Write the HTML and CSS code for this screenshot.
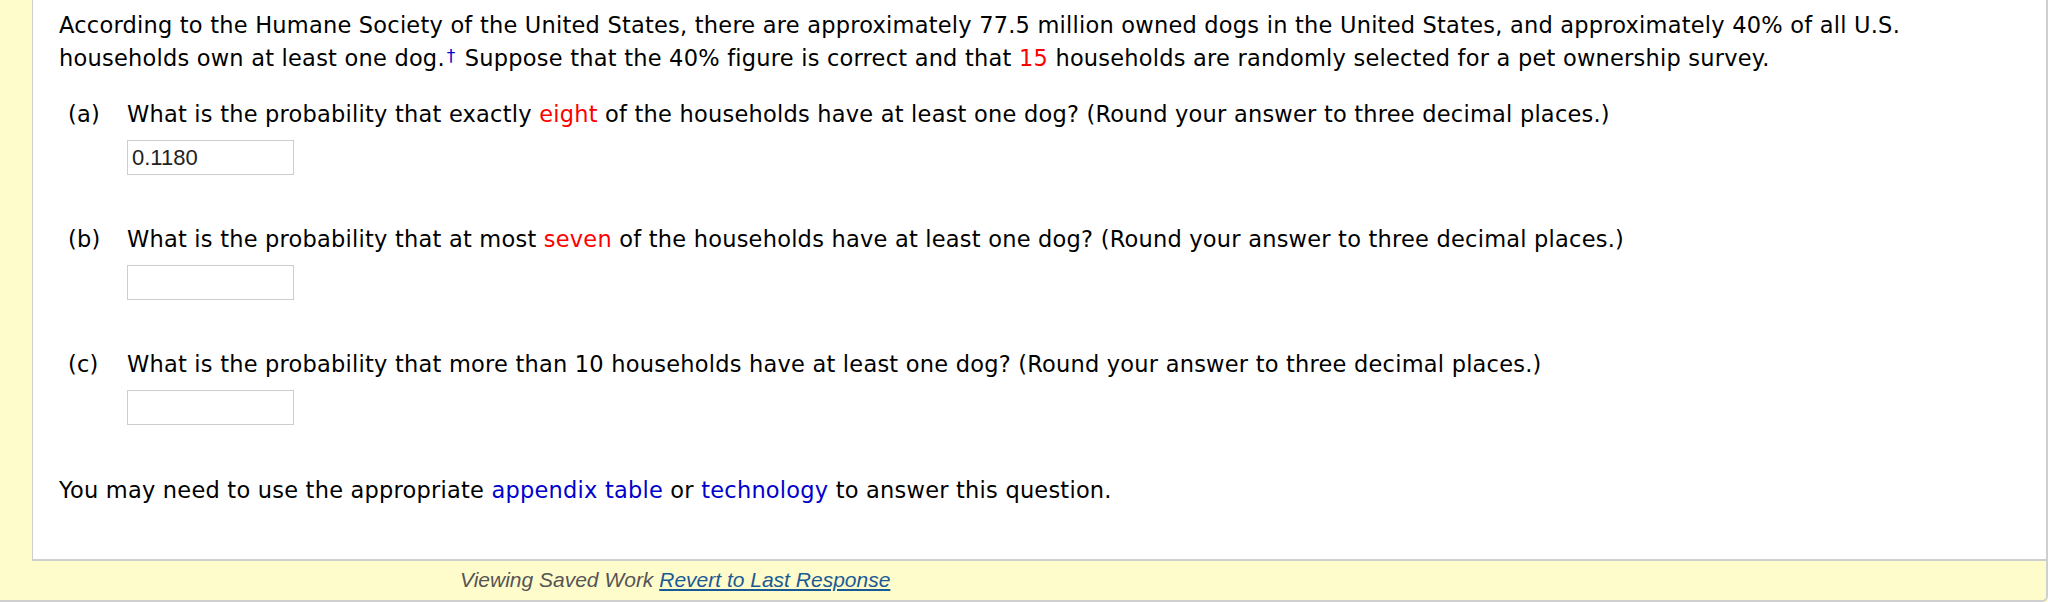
FILE: index.html
```html
<!DOCTYPE html>
<html>
<head>
<meta charset="utf-8">
<link rel="stylesheet" href="styles.css">
</head>
<body>
<div class="frame">
  <div class="panel">
    <p class="intro">According to the Humane Society of the United States, there are approximately 77.5 million owned dogs in the United States, and approximately 40% of all U.S. households own at least one dog.<span class="dagger">†</span> Suppose that the 40% figure is correct and that <span class="red">15</span> households are randomly selected for a pet ownership survey.</p>

    <div class="part">
      <span class="label">(a)</span>
      <div class="body">
        <div class="question">What is the probability that exactly <span class="red">eight</span> of the households have at least one dog? (Round your answer to three decimal places.)</div>
        <div class="answer">0.1180</div>
      </div>
    </div>

    <div class="part">
      <span class="label">(b)</span>
      <div class="body">
        <div class="question">What is the probability that at most <span class="red">seven</span> of the households have at least one dog? (Round your answer to three decimal places.)</div>
        <div class="answer"></div>
      </div>
    </div>

    <div class="part">
      <span class="label">(c)</span>
      <div class="body">
        <div class="question">What is the probability that more than 10 households have at least one dog? (Round your answer to three decimal places.)</div>
        <div class="answer"></div>
      </div>
    </div>

    <p class="note">You may need to use the appropriate <a class="ref">appendix table</a> or <a class="ref">technology</a> to answer this question.</p>
  </div>
  <div class="footer"><span class="saved">Viewing Saved Work</span> <a class="revert">Revert to Last Response</a></div>
</div>
</body>
</html>
```

FILE: styles.css
```css
html, body {
  margin: 0;
  padding: 0;
  background: #fffccc;
}

.frame {
  width: 2046px;
  height: 600px;
  background: #fffccc;
  border-right: 2px solid #cfcfcf;
  border-bottom: 2px solid #cfcfcf;
  border-bottom-right-radius: 6px;
  display: flex;
  flex-direction: column;
}

.panel {
  margin-left: 32px;
  height: 561px;
  box-sizing: border-box;
  background: #ffffff;
  border-left: 1px solid #cfcfcf;
  border-bottom: 2px solid #cfcfcf;
  padding: 10px 0 0 26px;
  font-family: "DejaVu Sans", Verdana, sans-serif;
  font-size: 22.5px;
  letter-spacing: 0.22px;
  line-height: 31px;
  color: #000;
}

.intro {
  margin: 0;
  max-width: 1890px;
}

.dagger {
  color: #0000cc;
  font-size: 17px;
  vertical-align: 4px;
  margin-left: 2px;
  margin-right: 2px;
}

.red {
  color: #ff0000;
}

.part {
  display: flex;
  margin-top: 25px;
  margin-left: 9px;
}

.part + .part {
  margin-top: 49px;
}

.label {
  width: 59px;
  flex: none;
}

.body {
  display: flex;
  flex-direction: column;
  gap: 10px;
}

.answer {
  width: 167px;
  height: 35px;
  box-sizing: border-box;
  border: 1px solid #cdcdcd;
  font-family: "Liberation Sans", Arial, sans-serif;
  font-size: 22px;
  letter-spacing: 0;
  line-height: 33px;
  padding-left: 4px;
  color: #222;
}

.note {
  margin: 50px 0 0 0;
}

.ref {
  color: #0000cc;
}

.footer {
  flex: 1;
  padding-left: 460px;
  font-family: "Liberation Sans", Arial, sans-serif;
  font-style: italic;
  font-size: 21px;
  line-height: 37px;
  color: #555555;
}

.revert {
  color: #1a5a94;
  text-decoration: underline;
}
```
